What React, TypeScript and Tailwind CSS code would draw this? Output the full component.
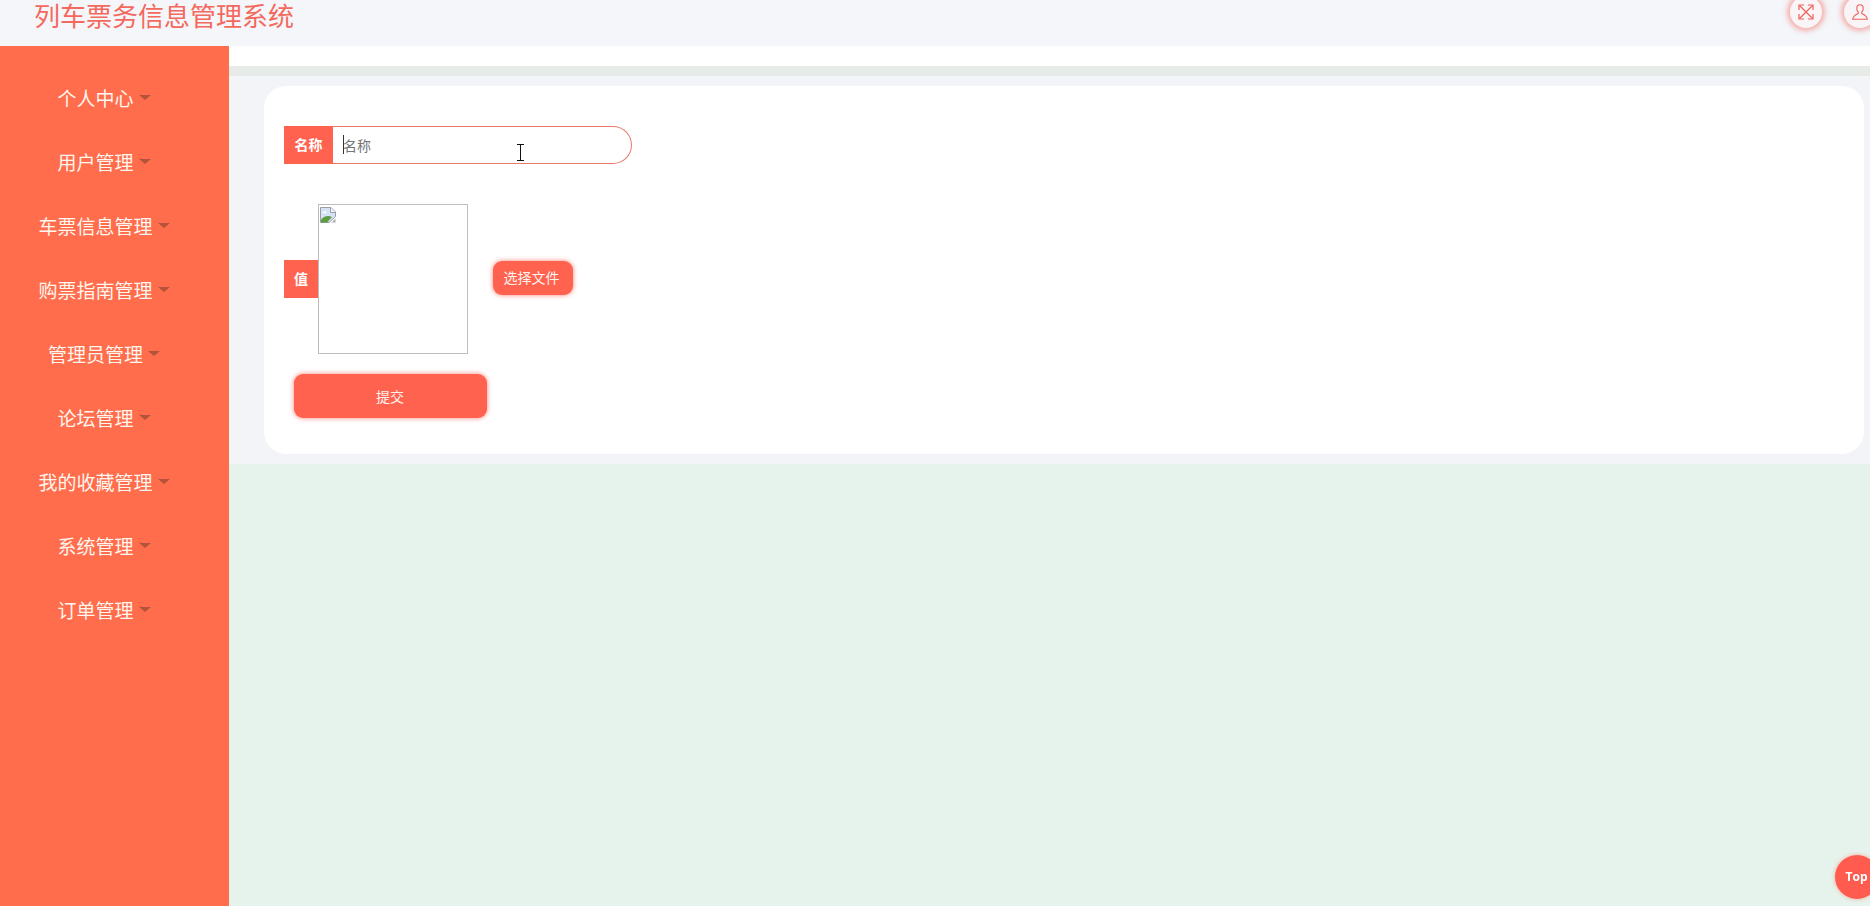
const menuItems = ["个人中心", "用户管理", "车票信息管理", "购票指南管理", "管理员管理", "论坛管理", "我的收藏管理", "系统管理", "订单管理"];

const cjk = { fontFamily: '"Noto Sans CJK SC", "Noto Sans", sans-serif' };

function ExpandIcon() {
	return (
		<svg viewBox="0 0 16 16" className="h-4 w-4" fill="none" stroke="currentColor" strokeWidth="1.2" aria-hidden="true">
			<path d="M1.500 1.500l13 13M14.500 1.500l-13 13" />
			<path d="M1 6V1h5M10 1h5v5M15 10v5h-5M6 15H1v-5" />
		</svg>
	);
}

function UserIcon() {
	return (
		<svg viewBox="0 0 16 16" className="h-4 w-4" fill="none" stroke="currentColor" strokeWidth="1.1" aria-hidden="true">
			<path d="M8 .8c-2 0-3.200 1.500-3.200 3.600 0 1.500.6 2.900 1.400 3.700v1.500c-1.200.7-5 1.400-5.500 5.700h14.600c-.5-4.300-4.300-5-5.500-5.700V8.100c.8-.8 1.400-2.200 1.400-3.700C11.200 2.300 10 .8 8 .8z" />
		</svg>
	);
}

function BrokenImageIcon() {
	return (
		<svg viewBox="0 0 16 16" className="mt-[2px] ml-px h-4 w-4" aria-hidden="true">
			<path d="M.5.500h10.500l4.500 4.500v4.500l-6.500 6H.5z" fill="#d5e2f7" stroke="#9a9fa5" />
			<path d="M10.500.500v5h5" fill="#f4f6f8" stroke="#9a9fa5" />
			<path d="M1 15.500V13c2-3 5-4.500 8-4l3 1-5 5.500z" fill="#5f9c40" />
			<path d="M2 6c1-2 4-2 5 0z" fill="#fff" />
			<path d="M11.500 15.500l4-4v4z" fill="#a9adb1" />
		</svg>
	);
}

function MouseBeam() {
	return (
		<svg viewBox="0 0 9 17" className="absolute top-[18px] left-[183px] h-[17px] w-[9px]" fill="none" stroke="#111" strokeWidth="1" aria-hidden="true">
			<path d="M1 .5h7M4.500.500v16M1 16.500h7" />
		</svg>
	);
}

export default function App() {
	return (
		<div className="flex h-[906px] w-[1870px] flex-col overflow-hidden bg-[#e6f3ec]" style={cjk}>
			<header className="flex h-[46px] shrink-0 items-start justify-between overflow-hidden bg-[#f4f6fa] pl-[34px]">
				<h1 className="text-[26px] leading-[30px] font-normal text-[#f4695e]">列车票务信息管理系统</h1>
				<div className="-mt-[4px] -mr-[6px] flex gap-[22px]">
					<span className="flex h-8 w-8 items-center justify-center rounded-full bg-[#f9f4f5] text-[#ef5f5c] shadow-[0_0_5px_3px_rgba(244,110,100,0.5)]">
						<ExpandIcon />
					</span>
					<span className="flex h-8 w-8 items-center justify-center rounded-full bg-[#f9f4f5] text-[#ef5f5c] shadow-[0_0_5px_3px_rgba(244,110,100,0.5)]">
						<UserIcon />
					</span>
				</div>
			</header>
			<div className="flex min-h-0 flex-1">
				<aside className="w-[229px] shrink-0 bg-[#ff6d4d] pt-[20px]">
					<ul className="w-[191px]">
						{menuItems.map((name) => (
							<li key={name} className="flex h-[64px] items-center justify-center text-[19px] text-[#fff6ee]">
								<span className="relative">
									{name}
									<span className="absolute top-[11px] -right-[17px] h-0 w-0 border-x-[6px] border-t-[5px] border-x-transparent border-t-[#b4523a]" />
								</span>
							</li>
						))}
					</ul>
				</aside>
				<main className="min-w-0 flex-1">
					<div className="h-5 bg-white" />
					<div className="h-[10px] bg-[#e6ebe8]" />
					<section className="bg-[#f3f4f8] py-[10px] pr-[6px] pl-[35px]">
						<form className="flex h-[368px] flex-col rounded-[22px] bg-white pt-[40px] pl-[20px]">
							<div className="flex h-[38px] w-[348px]">
								<label className="flex w-[49px] shrink-0 items-center justify-center bg-[#ff6350] pb-[2px] text-sm font-bold text-white">名称</label>
								<div className="relative flex-1">
									<input placeholder="名称" className="h-full w-full rounded-r-[19px] border border-l-0 border-[#e8786c] bg-white pl-[10px] text-sm leading-none text-[#555] outline-none placeholder:text-[#757575]" />
									<span className="absolute top-[9px] left-[10px] h-[19px] w-px bg-[#333]" />
									<MouseBeam />
								</div>
							</div>
							<div className="mt-[40px] flex h-[150px] items-center">
								<label className="flex h-[38px] w-[34px] shrink-0 items-center justify-center bg-[#ff6350] pb-[3px] text-sm font-bold text-white">值</label>
								<div className="h-[150px] w-[150px] shrink-0 border border-[#bdbdbd] bg-white">
									<BrokenImageIcon />
								</div>
								<button type="button" className="mb-[2px] ml-[25px] flex h-[34px] w-[80px] items-center justify-center rounded-[9px] bg-[#ff6350] pr-[3px] pb-[2px] text-sm text-[#fff3ee] shadow-[0_0_5px_rgba(255,99,80,0.8)]">选择文件</button>
							</div>
							<button type="button" className="mt-5 ml-[10px] flex h-[44px] w-[193px] items-center justify-center rounded-[9px] bg-[#ff6350] pr-px pb-px text-sm text-[#fff3ee] shadow-[0_0_5px_rgba(255,99,80,0.8)]">提交</button>
						</form>
					</section>
				</main>
			</div>
			<button type="button" className="fixed top-[855px] left-[1835px] flex h-[44px] w-[44px] items-center justify-center rounded-full bg-[#ff5b4f] pr-px text-[12px] font-bold text-white shadow-[0_0_4px_rgba(255,99,80,0.5)]" style={{ fontFamily: '"Open Sans", sans-serif' }}>Top</button>
		</div>
	);
}
